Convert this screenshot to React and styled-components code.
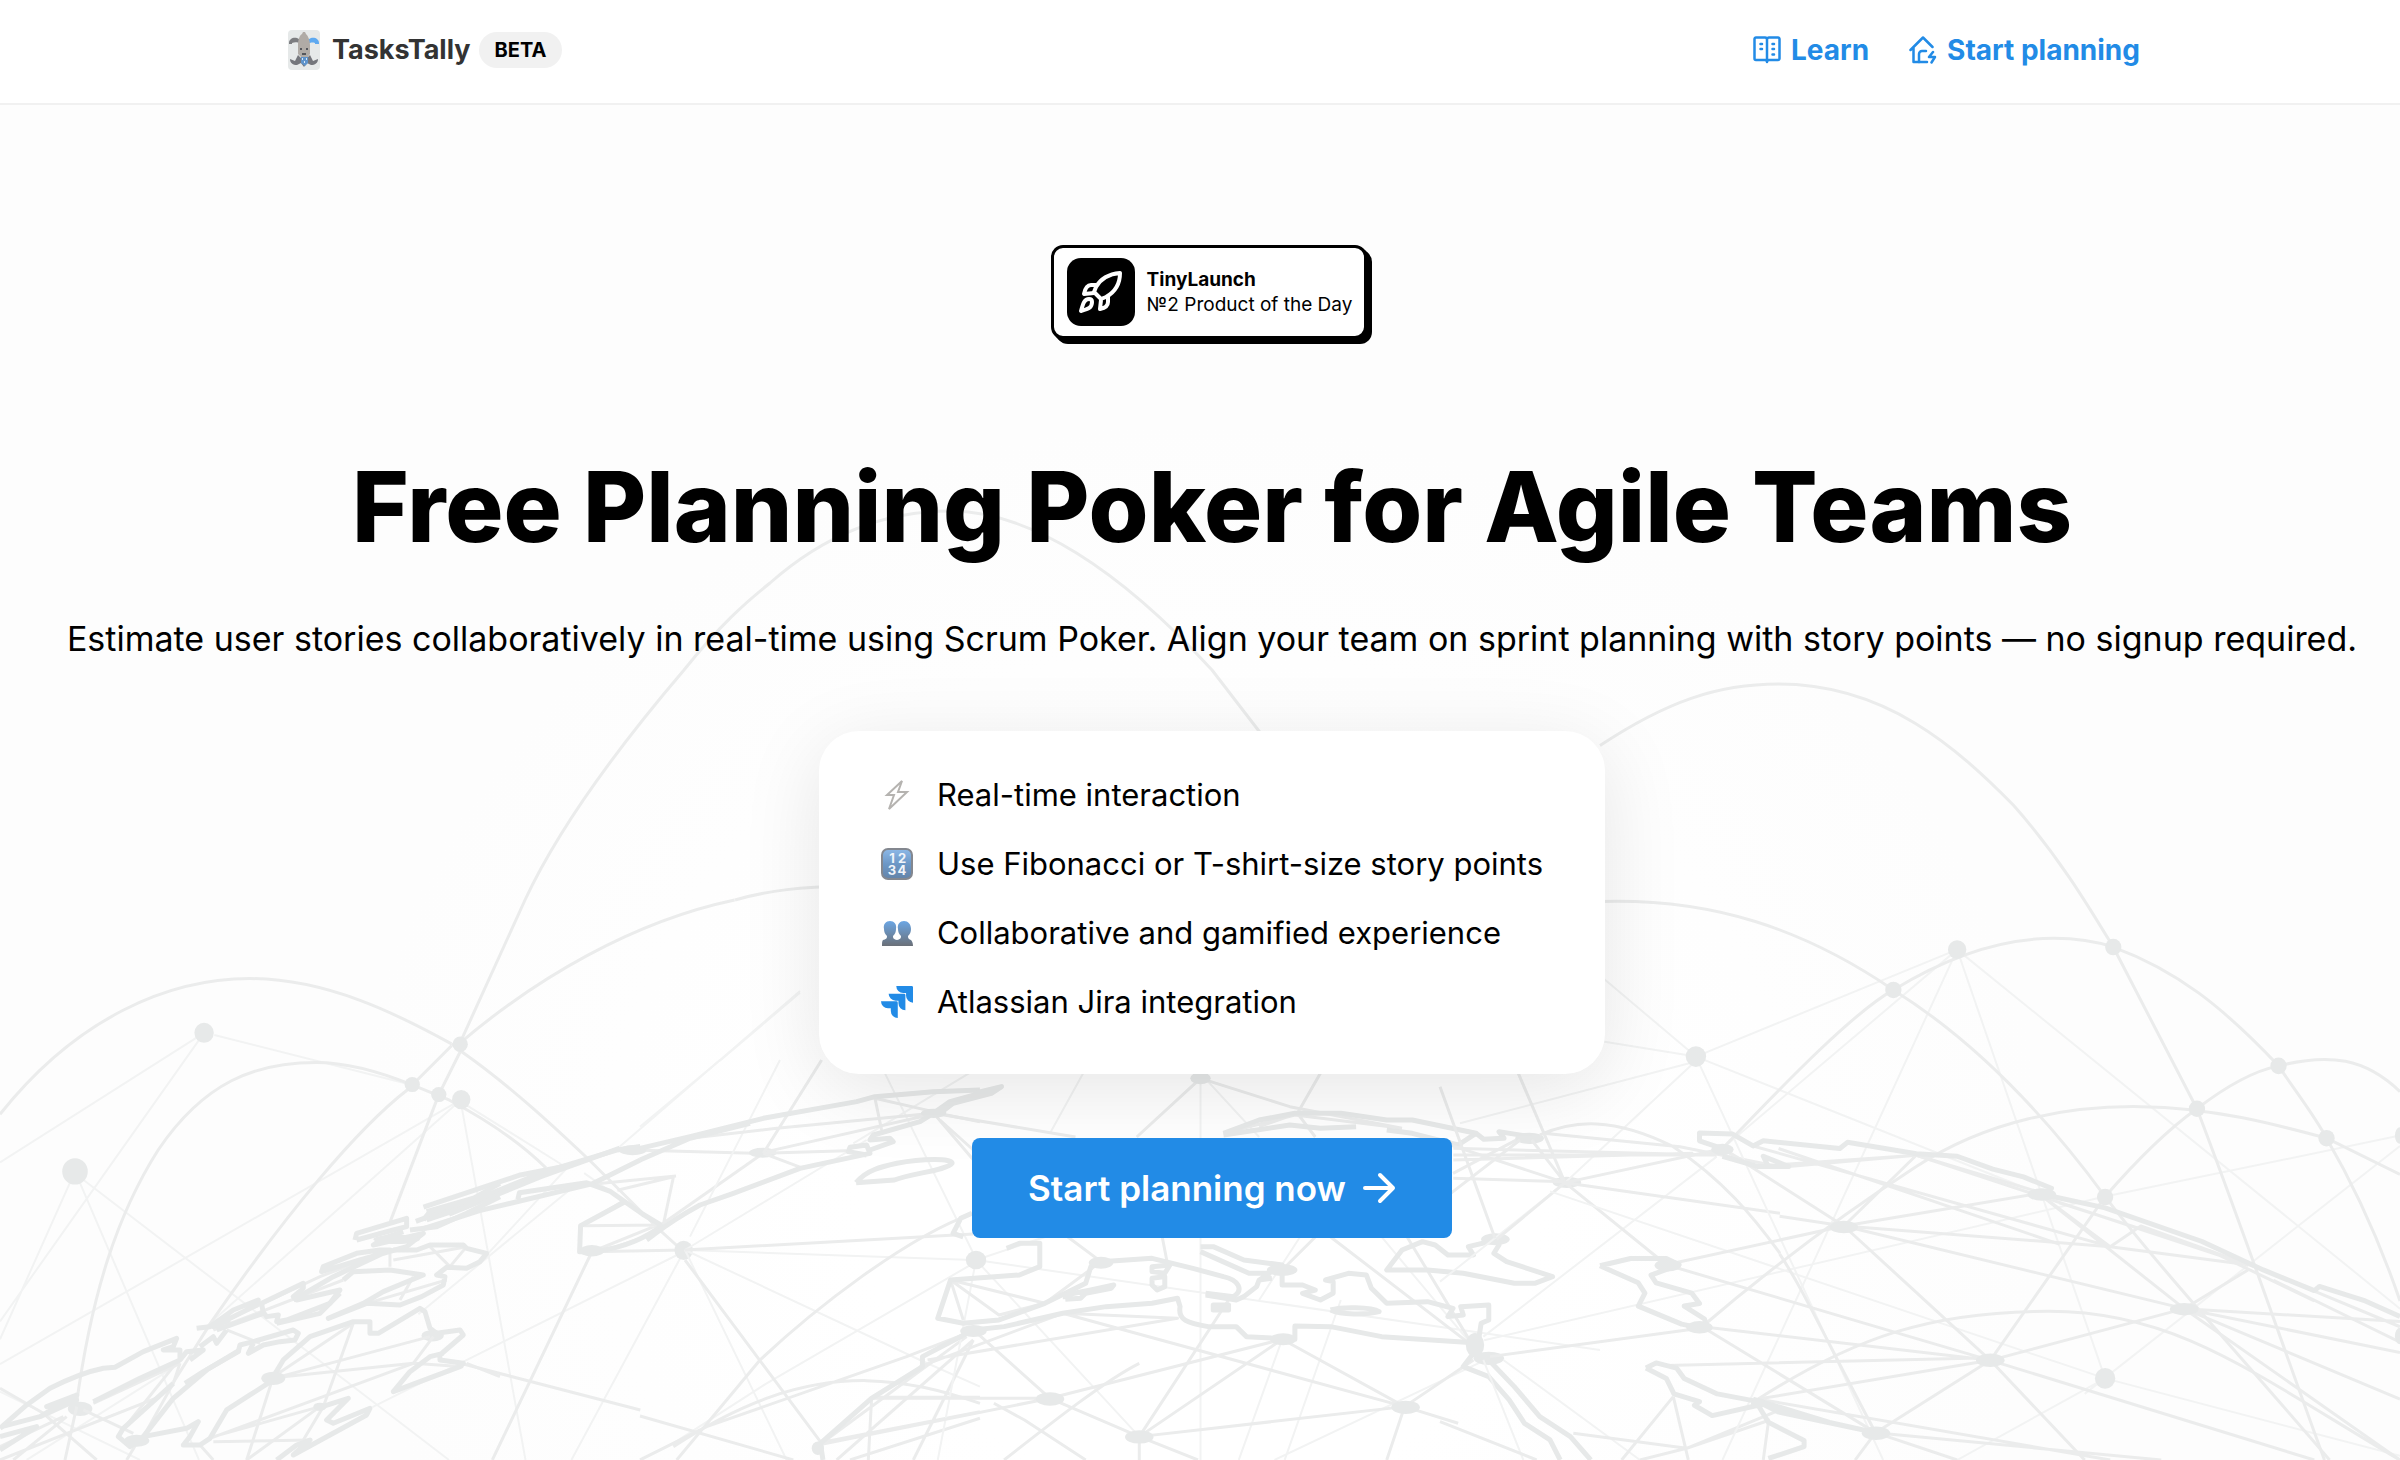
import React from "react"
import styled, { createGlobalStyle } from "styled-components"
import { SiJira } from "react-icons/si"

const GlobalStyle = createGlobalStyle`
  :root {
    --mainColor: #228be6;
    --textColor: #000;
    --lineColor: #e7e9e9;
  }
  * {
    box-sizing: border-box;
  }
  body {
    margin: 0;
    min-height: 100vh;
    background: #fdfdfd;
    color: var(--textColor);
    font-family: Inter, "Liberation Sans", sans-serif;
  }
`

/* ---------- icons ---------- */

const JokerCard = () => (
  <svg width="32" height="40" viewBox="0 0 32 40" aria-hidden="true">
    <rect width="32" height="40" rx="4" fill="#e6e9e9" />
    <path d="M1 13c0-4 4-6 8-5 3 1 4 3 4 6-3-2-6-2-9-1v1H1z" fill="#7c7d80" />
    <path d="M31 13c0-4-4-6-8-5-3 1-4 3-4 6 3-1 5-2 8-1v1h4z" fill="#5ea9f0" />
    <path d="M10 15c0-6 2-10 4-11l1-2h2l1 2c2 2 4 6 4 11v9l-3 4h-5l-4-4z" fill="#b0aba6" />
    <path d="M12 18h2v2h-2zM18 18h2v2h-2zM14 23h4v2h-4z" fill="#55575c" />
    <path
      d="M10 25l-3 6-5-2c0 4 3 6 7 6l4-2 3 4 3-4 4 2c4 0 7-2 7-6l-5 2-3-6-3 3h-6z"
      fill="#74767c"
    />
    <path d="M13 27h7v6l-3 3-4-3z" fill="#5d93cc" />
    <path d="M14 28h1v2h-1zM18 28h1v2h-1zM16 31h1v2h-1z" fill="#d7e6f5" />
  </svg>
)

const BookIcon = () => (
  <NavSvg viewBox="0 0 28 28" aria-hidden="true">
    <path d="M14 3.500a2 2 0 0 0-2-2H3a1.500 1.500 0 0 0-1.500 1.500v19.500A1.500 1.500 0 0 0 3 24h9a2 2 0 0 1 2 2 2 2 0 0 1 2-2h9a1.500 1.500 0 0 0 1.500-1.500V3A1.500 1.500 0 0 0 25 1.500h-9a2 2 0 0 0-2 2V26" />
    <path d="M7.500 8h1.500M7.500 13h1.500M19.500 8h1.500M19.500 13h1.500M19.500 18.500h1.500" />
  </NavSvg>
)

const HomeBoltIcon = () => (
  <NavSvg viewBox="0 0 28 28" aria-hidden="true">
    <path d="M1.500 14L14 1.500l9.500 9.500M4.500 12v14H18" />
    <path d="M10 26v-8a3 3 0 0 1 3-3h4" />
    <path d="M24 16l-4 5h6l-3.500 5.500" />
  </NavSvg>
)

const RocketIcon = () => (
  <svg
    width="44"
    height="44"
    viewBox="0 0 44 44"
    fill="none"
    stroke="#fff"
    strokeWidth="4"
    strokeLinejoin="round"
    aria-hidden="true"
  >
    <path d="M41 3c0 11-5 19-14 24l-5 2-7-7 2-5C22 8 30 4 41 3z" />
    <path d="M17 15h-5c-4 0-6 4-7 9l10-1M29 26v6c0 4-3 6-8 7l1-9" />
    <path d="M13 32c0 6-4 7-11 9 2-7 3-12 8-12 2 0 3 1 3 3z" />
  </svg>
)

const BoltIcon = () => (
  <svg
    width="32"
    height="34"
    viewBox="0 0 32 34"
    fill="none"
    stroke="#b5b3b0"
    strokeWidth="2"
    aria-hidden="true"
  >
    <path d="M21 3L6 17h7L8 31 26 14h-9z" />
  </svg>
)

const NumbersIcon = () => (
  <svg width="32" height="32" viewBox="0 0 32 32" aria-hidden="true">
    <defs>
      <linearGradient id="numbers" x1="0" y1="0" x2="0" y2="1">
        <stop offset="0" stopColor="#8db9e8" />
        <stop offset="0.500" stopColor="#6c97c6" />
        <stop offset="1" stopColor="#6383a8" />
      </linearGradient>
    </defs>
    <rect x="1" y="1" width="30" height="30" rx="6" fill="url(#numbers)" stroke="#83878f" strokeWidth="2" />
    <g fill="#f1f5fa" fontSize="13" fontWeight="700" textAnchor="middle">
      <text x="11" y="15">1</text>
      <text x="21" y="15">2</text>
      <text x="11" y="27">3</text>
      <text x="21" y="27">4</text>
    </g>
  </svg>
)

const PeopleIcon = () => (
  <svg width="32" height="32" viewBox="0 0 32 32" aria-hidden="true">
    <defs>
      <linearGradient id="people" x1="0" y1="0" x2="0" y2="1">
        <stop offset="0" stopColor="#6ba6e4" />
        <stop offset="1" stopColor="#6b7078" />
      </linearGradient>
    </defs>
    <path
      fill="url(#people)"
      d="M9 4c4 0 7 3 6 8 0 3-1 5-3 7 0 3 1 3 4 4 3-1 4-1 4-4-2-2-3-4-3-7-1-5 2-8 6-8s7 3 7 8c0 3-1 5-3 7 0 3 1 3 3 4 1 1 2 3 2 6H1c0-3 0-5 1-6 3-1 4-1 4-4-2-2-3-4-3-7-1-5 2-8 6-8z"
    />
  </svg>
)

const ArrowIcon = () => (
  <svg
    width="34"
    height="32"
    viewBox="0 0 34 32"
    fill="none"
    stroke="#fff"
    strokeWidth="4"
    strokeLinecap="round"
    strokeLinejoin="round"
    aria-hidden="true"
  >
    <path d="M3 16h28M18 3l13 13-13 13" />
  </svg>
)

/* ---------- world map with its connections ---------- */

// each area is drawn on a grid of its own and placed by its transform
const areas = [
  {
    name: "arcs",
    transform: "matrix(1 0 0 1 0 0)",
    main: [
      "M460 1043L525 900C560 825 620 745 684 670C720 625 745 603 770 583C830 530 890 511 950 511C1030 511 1120 570 1212 670L1262 735",
      "M735 900C770 890 800 887 850 886",
    ],
    thin: [],
    coast: [],
    nodes: [],
  },
  {
    name: "west",
    transform: "matrix(0.5102 0 0 0.3571 0 900)",
    main: [
      "M0 600C150 330 330 220 490 220C640 220 780 320 885 403",
      "M885 403L905 425C1000 520 1090 640 1160 735L1290 920L1340 985",
      "M150 1410C180 1100 230 880 310 700C400 510 500 455 620 455C690 455 760 490 808 518L880 560C960 620 1020 680 1070 750",
      "M902 400C1050 220 1240 60 1440 0",
      "M885 408L808 518M902 425L860 545L765 900",
      "M800 530C700 640 560 880 415 1180L340 1350",
      "M1160 985L965 1568M910 1300L1255 1428",
      "M1240 700L1495 710M1495 710L1295 910M1160 985L1340 980M1145 912L1295 910M1165 795L1325 773M1210 813L1320 775M1320 775L1300 910M1140 912L1225 840M1160 985L1290 910M1190 980L1290 930",
    ],
    thin: [
      "M400 372L0 735M400 372L0 1180M420 378L808 518M147 760L0 1230M147 760L390 1568M160 780L880 1568",
      "M903 560L0 1300M903 560L400 1200M905 580L1030 1568M915 575L1100 740M1568 255L1215 690",
      "M1340 985L730 1420M1340 985L1120 1568M1568 260L1411 450",
      "M1118 740L950 1000M1118 810L820 1160M1145 765L1300 920",
    ],
    coast: [
      "M815 900L930 840L1070 760L1210 700L1255 690",
      "M830 920L940 870L1160 795L1255 728",
      "M1015 838L1018 820L1150 792L1195 815L1220 840L1260 880L1295 910",
      "M1160 985L1136 985L1138 912L1225 845M1160 985C1230 975 1270 940 1300 910",
      "M880 880L1060 775L1215 695M830 860L1020 770L1110 745",
    ],
    nodes: [
      [400, 372, 19, 28],
      [147, 760, 25, 37],
      [808, 517, 15, 21],
      [860, 545, 15, 21],
      [904, 559, 18, 27],
      [902, 404, 15, 22],
      [1340, 981, 18, 27],
      [1240, 701, 27, 14],
      [1495, 708, 27, 14],
      [1160, 982, 24, 16],
      [848, 1220, 22, 16],
      [157, 1425, 24, 20],
    ],
  },
  {
    name: "america",
    transform: "matrix(0.3333 0 0 0.3333 0 1150)",
    main: [
      "M230 770L195 930M0 715L130 790L290 930M820 680L740 930M820 680L1060 520M840 680L1290 560M850 680L1240 640L1390 650M1060 520L970 770M970 770L910 870",
      "M630 865L1240 640L1300 560M640 860L960 770M640 875L930 870M250 780L400 850M600 885L640 930M430 860L520 700L540 640M360 850L520 650",
      "M1170 310L1170 350M1180 330L1400 290M1290 290L1350 350L1400 290M1200 450L1240 380M1100 460L1340 390M680 540L780 580M640 540L1030 390M640 530L960 380L1170 300M280 760L540 640",
      "M0 930L480 740M40 930L200 800M0 890L190 800M740 930L960 770M1400 640L1500 680M380 930L410 880",
    ],
    thin: ["M80 930L540 640M0 725L420 930M200 850L480 740"],
    coast: [
      "M0 835L80 765L150 715C210 685 260 665 310 655L345 652L430 605L530 565L520 590L490 600L540 600L540 630L420 685L280 755",
      "M5 830L120 800L230 735L140 770L230 750L120 800M0 860L110 830L0 900",
      "M540 630L560 605L610 600L570 630M600 590L640 560L650 580L680 540M590 535L630 530L700 480L775 450L770 465L640 530L690 510",
      "M650 540L790 490L785 460L910 400L910 415L880 440L890 450L1020 420L990 460L860 510L830 515L835 495L800 500L785 480",
      "M830 520L960 490L1020 430M880 450L1000 380L1170 300L1140 300L1070 310L970 350L965 365L1080 330L1220 290L1270 250L1120 285L1150 265L1210 245",
      "M1065 270L1070 250L1170 220L1220 205L1220 230L1180 240L1070 270M1230 240L1310 230L1400 190L1500 140",
      "M1270 210L1290 185L1420 145L1500 100M1280 185L1470 130L1400 170L1280 210",
      "M1180 300L1250 300L1290 285L1390 285L1400 295L1460 310L1440 335L1400 355L1340 352L1310 375L1335 380L1330 405L1265 440L1200 465L1100 460L985 505L1090 460L1150 425L1270 375L1170 360L1060 365L1030 390",
      "M820 680L850 630L930 560L1060 515L1110 515L1110 550L1135 550L1260 475L1275 485L1290 535L1310 550L1380 540L1390 555L1320 615L1320 630L1390 640L1380 650L1180 725L1230 665L1290 620L1330 610",
      "M820 690L750 735L680 780L630 865L600 885L550 885L570 860L595 815L560 835L430 860L390 890L355 860L370 835L520 700",
      "M555 700L610 665L715 605L720 585L760 575L880 540L895 550L885 570L840 575L790 585L745 610L760 580",
      "M950 775L1045 745L1020 770L980 810L1000 820L1110 775L1100 795L990 855L880 915L930 870L890 885L830 930",
      "M430 860L520 745L620 660L720 600",
    ],
    nodes: [
      [820, 685, 36, 20],
      [410, 872, 38, 18],
      [1190, 268, 70, 14],
      [960, 770, 20, 12],
    ],
  },
  {
    name: "atlantic",
    transform: "matrix(0.3333 0 0 0.3333 640 1060)",
    main: [
      "M380 275L890 160M370 280L620 272M370 280L490 325M370 280L545 0M880 160L410 205L150 235",
      "M705 115L880 155M705 115L725 210M900 180L1000 270M920 165L1020 185M135 570L1000 522",
      "M135 600L545 1150M0 1068L460 1200M110 1200L360 900C520 750 800 530 1000 460",
      "M100 1160C300 1030 480 960 680 962C800 965 900 990 1020 1030M0 1200L200 1100L800 890L980 820",
      "M700 1012L1020 1012M695 1012L685 1200M555 1145L1020 1055M630 1200L1020 1075M980 830L545 1150M1000 840L820 1200M1000 840L590 1200",
    ],
    thin: [
      "M420 0L150 530M240 0L0 200M135 570L680 240M135 570L1000 600M135 570L440 1200M135 570L840 900L1020 980",
      "M735 40L1000 580M1000 610L380 970L100 1150M1020 20L640 250",
    ],
    coast: [
      "M0 265L150 230L370 175L650 125L705 110L880 95L1020 90M0 300L150 235L330 190",
      "M1020 100L930 125L880 160L840 185L700 225L690 240L750 235L760 245L690 270",
      "M20 540C50 520 70 495 180 435L280 400L480 325L690 280L680 255L630 262L625 275L680 285",
    ],
    nodes: [],
  },
  {
    name: "europe",
    transform: "matrix(0.5102 0 0 0.3333 800 1000)",
    main: [
      "M262 340L540 411M262 340L340 480",
      "M785 235L660 411M785 235L960 320L1180 385M975 340L1020 220M975 340L1010 411M975 340L900 380M830 400L970 345L1180 385M1410 415L1280 520",
      "M590 785L525 711M590 785L480 910M340 990L490 1195L665 1310L945 1018M490 1195L145 1195M490 1195L35 1335M490 1195L945 1018M665 1310L1185 1220L945 1018M665 1310L665 1380M665 1310L780 1380M1185 1220L1150 1380M1185 1220L1320 1080M1185 1220L1290 1270M1185 1220L515 940M515 940L235 1100M515 940L740 955L250 1080M295 840L480 910L390 945L295 840M295 840L320 960M945 810L1010 711M1320 1040L1040 711M1320 1040L1190 711M710 711L720 790",
      "M380 1210L440 1260L560 1380M400 1380C500 1260 600 1140 665 1090M840 900L665 1310",
    ],
    thin: [
      "M785 220L785 1380M345 780L1568 1050M345 780L665 1310M345 780L480 711M555 220L490 400M785 220L900 411M345 780L270 1380M1350 1075L930 1380M1320 1040L1140 711M900 900L980 711M1060 900L950 1380M945 1018L860 1380",
    ],
    coast: [
      "M340 280L395 260L375 280L300 310L270 345",
      "M110 548C130 510 160 500 190 490C240 475 300 475 298 490C290 510 220 520 185 540L110 548",
      "M337 640L315 655L300 700L320 711M405 745L430 730L470 730L470 800L430 825L295 840L270 955L320 970L390 960L480 910L560 850L570 800L590 785L690 775L770 805L830 830C860 840 870 870 850 890L795 880",
      "M785 740L810 740L870 780L945 795L945 855L985 855L1010 870L985 880L1020 900L1045 880L1045 845L1030 840L1075 820L1110 825L1120 865L1150 910L1230 905L1280 925L1270 950L1300 945L1295 920L1350 915L1350 960L1335 970L1330 1020",
      "M785 755L880 820L920 820L900 840L895 860L870 890L855 900L795 885M925 835L900 840",
      "M1320 1028L1140 1010L1040 980L970 978L970 1018L875 1010L855 980L800 980C760 970 740 960 745 920L740 895L690 910L600 920L515 940L400 980L340 990L290 1030L240 1070L240 1100L140 1195L40 1330L45 1380",
      "M690 800L725 795L715 820L690 815ZM690 835L715 830L715 860L700 870L690 855ZM810 915L840 915L840 930L810 930ZM520 898L520 885L570 870L615 855L610 865L560 880L550 895L520 898",
      "M1040 930C1060 920 1120 920 1135 935C1110 945 1060 945 1040 930",
      "M1365 720L1310 740L1320 765L1270 765L1245 735L1220 725L1180 750L1150 810L1230 810L1300 820L1400 850L1440 850L1475 830L1385 785L1360 760L1370 735Z",
      "M1320 1060L1300 1100L1350 1130L1390 1200L1420 1270L1470 1320L1490 1380M1350 1080L1400 1160L1450 1250L1510 1310L1550 1380",
      "M830 400L900 360L970 340L1060 340L1150 360L1200 360L1325 400L1290 435L1200 400L1150 390M1325 400L1340 418L1380 415L1370 395L1430 410M830 405L960 375L1020 385L1090 380",
    ],
    nodes: [
      [262, 340, 25, 14],
      [785, 235, 20, 18],
      [345, 780, 20, 28],
      [590, 788, 24, 18],
      [945, 810, 30, 18],
      [340, 993, 26, 18],
      [947, 1018, 26, 18],
      [490, 1197, 28, 20],
      [665, 1311, 28, 20],
      [1187, 1222, 28, 20],
      [1323, 1035, 18, 36],
      [1350, 1075, 30, 20],
      [1430, 415, 28, 17],
      [1503, 547, 28, 17],
      [1363, 718, 28, 18],
      [35, 1345, 12, 20],
    ],
  },
  {
    name: "arabia",
    transform: "matrix(0.3333 0 0 0.3333 1440 1060)",
    main: [
      "M375 368L235 40M375 368L0 245M375 368L275 240M375 368L1020 460M375 368L830 270M375 368L680 615M375 368L170 538M165 535L0 80",
      "M240 240L0 425M300 225C400 180 520 170 700 260C850 360 940 470 1020 580M310 220L720 260L1020 320",
      "M40 265L820 285M40 300L760 280M40 285L830 285M40 355L375 365M150 890L780 805",
      "M700 1010L545 1200M700 1010L745 1200M0 1085L290 1200M400 1120L740 1165L990 1080M1020 1050L740 1165L600 1200",
    ],
    thin: ["M765 5L60 190M765 5L375 368L0 665M830 290L130 830M190 900L600 1200M130 900L250 1200"],
    coast: [],
    nodes: [],
  },
  {
    name: "east",
    transform: "matrix(0.5102 0 0 0.5166 1600 650)",
    main: [
      "M0 185C130 100 230 66 350 66C560 66 700 190 810 300C900 400 960 500 1006 575L1170 888C1260 1120 1350 1380 1420 1568",
      "M0 487C220 480 400 540 575 658C740 760 880 910 990 1058C1100 1200 1250 1360 1430 1568",
      "M240 965C380 820 500 700 575 658C720 570 830 558 890 558C930 558 975 565 1006 575C1130 620 1220 690 1330 805C1360 850 1400 900 1424 945C1480 1040 1530 1150 1568 1260",
      "M990 1058C1050 990 1110 930 1170 888C1220 850 1280 815 1330 805C1430 780 1500 790 1568 855",
      "M200 1310C330 1200 480 1090 620 1000C760 910 920 882 1060 884C1200 885 1330 920 1424 945L1568 1015",
      "M310 1450C500 1330 650 1280 880 1280C1130 1280 1280 1400 1568 1568",
      "M352 1169C400 1240 440 1330 540 1515M990 1058L765 1375M478 1115L860 1052M478 1115L620 978M478 1115L765 1375L950 1568",
      "M478 1115L130 1190M478 1115L240 965M478 1115L1145 1275M478 1115L1000 1155L1270 1190M130 1190L765 1375M200 1310L765 1375L1145 1275L1270 1200M200 1310L540 1515M540 1515L765 1375M130 1385L765 1370M310 1450L765 1375M540 1515L1100 1568M310 1450L1000 1568",
      "M352 1096L478 1115M240 965L300 1000L620 978M370 1000L620 978M620 978L870 1052M860 1052L1145 1275L1568 1568M1145 1275L1568 1300M1145 1275L1568 1360M1145 1275L1568 1450M860 1052L1000 1155L1060 1115L1300 1200L1568 1310M300 960L1000 1155M350 965L900 1150",
      "M765 1375L1400 1568M620 978L1270 1190M330 1495L320 1568M540 1515L700 1568M540 1515L500 1568M1320 1220L1568 1340M900 1070L1200 1165L1400 1260",
    ],
    thin: [
      "M188 787L0 630M188 787L0 757M188 787L700 580M188 787L830 1040M188 787L555 1568",
      "M700 580L240 965M700 580L240 1568M700 580L990 1410M700 580L1568 1275M990 1410L700 1568M990 1410L1568 1560M990 1410L-98 1048M-227 1336L990 1058L1568 940M1568 960L950 1440",
    ],
    coast: [
      "M240 965L195 950L195 935L260 937L300 960L320 950L470 965L485 953L620 975L700 980L770 1005L830 1020L885 1042L870 1055",
      "M330 1000L320 980L370 1000L310 1000L240 980M860 1052L990 1080L1180 1145L1300 1200L1400 1240L1410 1232L1500 1260L1568 1290",
      "M0 1192L60 1178L130 1178L155 1190L100 1210L110 1225L180 1245L195 1265L165 1270L205 1295L210 1315L160 1305L75 1270L88 1245L75 1225L0 1192",
      "M90 1390L110 1380L150 1390L165 1410L230 1440L310 1455L350 1475L540 1515M90 1390L130 1410L145 1440L195 1455L185 1462L220 1482L310 1462L330 1495L400 1530L400 1542L330 1565M300 1450L450 1495L540 1515",
    ],
    nodes: [
      [188, 787, 20, 20],
      [700, 580, 18, 18],
      [575, 658, 16, 16],
      [1006, 575, 16, 16],
      [1330, 805, 16, 16],
      [1170, 888, 16, 16],
      [1424, 945, 16, 16],
      [990, 1059, 16, 16],
      [990, 1410, 20, 20],
      [240, 967, 22, 11],
      [478, 1117, 28, 12],
      [866, 1054, 28, 12],
      [1145, 1276, 28, 12],
      [765, 1375, 28, 13],
      [133, 1191, 26, 12],
      [195, 1311, 26, 12],
      [541, 1516, 28, 13],
      [1568, 940, 10, 16],
      [1568, 1328, 10, 16],
      [310, 1458, 14, 10],
    ],
  },
]

const WorldMap = () => (
  <MapSvg viewBox="0 105 2400 1355" preserveAspectRatio="xMidYMin slice" aria-hidden="true">
    {areas.map(({ name, transform, main, thin, coast, nodes }) => (
      <g key={name} transform={transform}>
        {thin.map((d) => (
          <path key={d} d={d} className="thin" />
        ))}
        {main.map((d) => (
          <path key={d} d={d} className="main" />
        ))}
        {coast.map((d) => (
          <path key={d} d={d} className="coast" />
        ))}
        {nodes.map(([cx, cy, rx, ry]) => (
          <ellipse key={`${cx}-${cy}`} cx={cx} cy={cy} rx={rx} ry={ry} />
        ))}
      </g>
    ))}
  </MapSvg>
)

/* ---------- page ---------- */

const features = [
  { icon: <BoltIcon />, text: "Real-time interaction" },
  { icon: <NumbersIcon />, text: "Use Fibonacci or T-shirt-size story points" },
  { icon: <PeopleIcon />, text: "Collaborative and gamified experience" },
  { icon: <SiJira size={32} color="#228be6" />, text: "Atlassian Jira integration" },
]

const App = () => {
  return (
    <Page>
      <GlobalStyle />
      <Header>
        <Brand href="/">
          <JokerCard />
          <span className="name">TasksTally</span>
          <Beta>BETA</Beta>
        </Brand>
        <Nav>
          <NavLink href="/learn">
            <BookIcon />
            Learn
          </NavLink>
          <NavLink href="/start">
            <HomeBoltIcon />
            Start planning
          </NavLink>
        </Nav>
      </Header>
      <Hero>
        <WorldMap />
        <Content>
          <LaunchBadge href="https://tinylaunch.com">
            <LaunchIcon>
              <RocketIcon />
            </LaunchIcon>
            <LaunchText>
              <strong>TinyLaunch</strong>
              <span>№2 Product of the Day</span>
            </LaunchText>
          </LaunchBadge>
          <Title>Free Planning Poker for Agile Teams</Title>
          <Subtitle>
            Estimate user stories collaboratively in real-time using Scrum Poker. Align your team on
            sprint planning with story points — no signup required.
          </Subtitle>
          <FeatureCard>
            {features.map(({ icon, text }) => (
              <Feature key={text}>
                {icon}
                {text}
              </Feature>
            ))}
          </FeatureCard>
          <StartButton type="button">
            Start planning now
            <ArrowIcon />
          </StartButton>
        </Content>
      </Hero>
    </Page>
  )
}

const Page = styled.div`
  min-height: 100vh;
  display: flex;
  flex-direction: column;
`

const Header = styled.header`
  display: flex;
  align-items: center;
  justify-content: space-between;
  height: 105px;
  padding: 0 260px 4px 288px;
  background: #fff;
  border-bottom: 2px solid #f1f1f1;
`

const Brand = styled.a`
  display: flex;
  align-items: center;
  color: #333;
  text-decoration: none;
  .name {
    margin-left: 12px;
    font-size: 27px;
    font-weight: 700;
  }
`

const Beta = styled.span`
  margin-left: 8px;
  padding: 0 16px;
  border-radius: 18px;
  background: #f1f1f1;
  color: #000;
  font-size: 20px;
  font-weight: 700;
  line-height: 36px;
`

const Nav = styled.nav`
  display: flex;
  gap: 40px;
`

const NavLink = styled.a`
  display: flex;
  align-items: center;
  gap: 10px;
  color: var(--mainColor);
  font-size: 28px;
  font-weight: 700;
  text-decoration: none;
`

const NavSvg = styled.svg`
  width: 28px;
  height: 28px;
  fill: none;
  stroke: var(--mainColor);
  stroke-width: 2.5;
  stroke-linecap: round;
  stroke-linejoin: round;
`

const Hero = styled.main`
  flex: 1;
  display: grid;
  grid-template-columns: minmax(0, 1fr);
  overflow: hidden;
  background: radial-gradient(ellipse at 50% 80%, #fff 20%, #fdfdfd 50%);
  > * {
    grid-area: 1 / 1;
  }
`

const MapSvg = styled.svg`
  width: 100%;
  height: 100%;
  fill: none;
  stroke: var(--lineColor);
  stroke-linejoin: round;
  path {
    vector-effect: non-scaling-stroke;
  }
  .thin {
    stroke: #f2f3f3;
    stroke-width: 2;
  }
  .main {
    stroke: #ebecec;
    stroke-width: 3;
  }
  .coast {
    stroke-width: 5;
  }
  ellipse {
    fill: var(--lineColor);
    stroke: none;
  }
`

const Content = styled.div`
  z-index: 1;
  display: flex;
  flex-direction: column;
  align-items: center;
  padding: 140px 0 0 24px;
`

const LaunchBadge = styled.a`
  display: flex;
  align-items: center;
  gap: 12px;
  margin-right: 6px;
  padding: 10px 12px 10px 13px;
  border: 3px solid #000;
  border-radius: 12px;
  background: #fff;
  box-shadow: 2px 2px 0 #000, 4px 4px 0 #000, 5px 5px 0 #000;
  color: #000;
  text-decoration: none;
`

const LaunchIcon = styled.span`
  display: grid;
  place-items: center;
  width: 68px;
  height: 68px;
  border-radius: 14px;
  background: #000;
`

const LaunchText = styled.span`
  display: flex;
  flex-direction: column;
  font-size: 19px;
  line-height: 25px;
`

const Title = styled.h1`
  margin: 108px 0 0;
  font-size: 97px;
  font-weight: 800;
  line-height: 120px;
  text-align: center;
`

const Subtitle = styled.p`
  margin: 44px 0 0;
  font-size: 34px;
  line-height: 56px;
  text-align: center;
`

const FeatureCard = styled.ul`
  display: flex;
  flex-direction: column;
  gap: 21px;
  margin: 64px 0 0;
  padding: 40px 62px 48px;
  border-radius: 40px;
  background: #fff;
  box-shadow: 0 16px 80px rgba(0, 0, 0, 0.1);
  list-style: none;
`

const Feature = styled.li`
  display: flex;
  align-items: center;
  gap: 24px;
  font-size: 31px;
  line-height: 48px;
`

const StartButton = styled.button`
  display: flex;
  align-items: center;
  gap: 16px;
  height: 100px;
  margin-top: 64px;
  padding: 0 56px;
  border: 0;
  border-radius: 8px;
  background: var(--mainColor);
  color: #fff;
  font-family: inherit;
  font-size: 35px;
  font-weight: 600;
  cursor: pointer;
`

export default App
